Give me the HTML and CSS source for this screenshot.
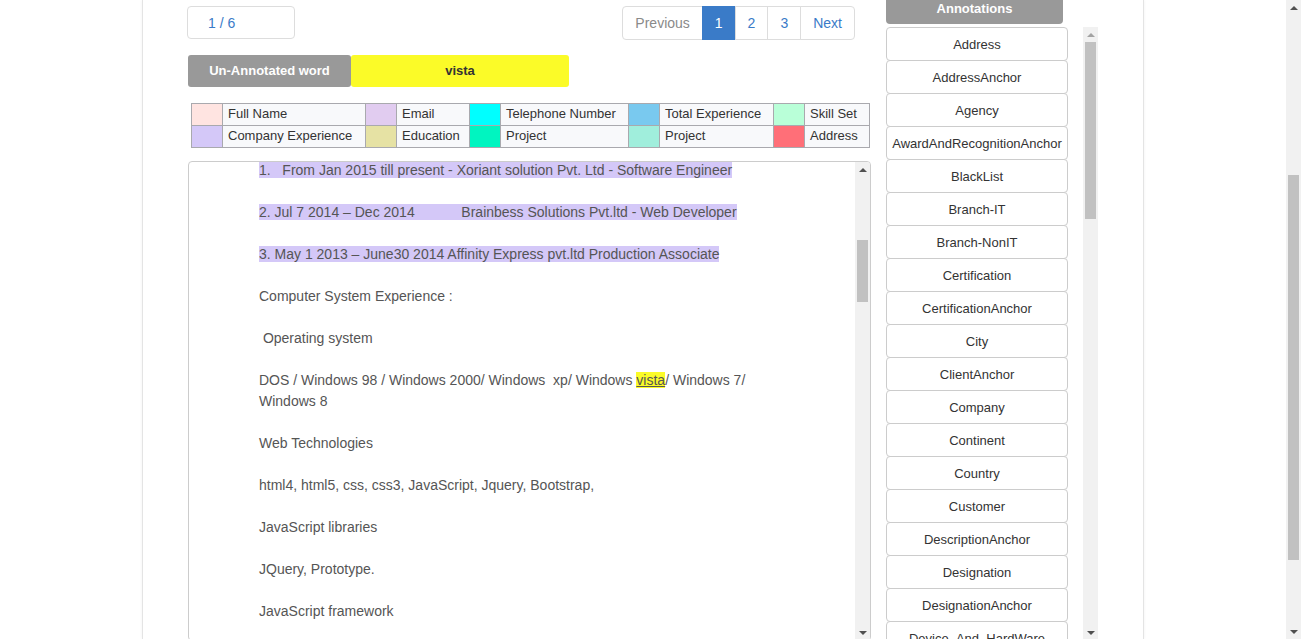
FILE: index.html
```html
<!DOCTYPE html>
<html lang="en">
<head>
<meta charset="utf-8">
<title>Annotation</title>
<link rel="stylesheet" href="styles.css">
</head>
<body>
<div class="window">
  <div class="viewport">
    <div class="container">
      <div class="main">
        <div class="left">
          <div class="toolbar">
            <div class="counter">1 / 6</div>
            <ul class="pagination">
              <li class="disabled"><a href="#">Previous</a></li>
              <li class="active"><a href="#">1</a></li>
              <li><a href="#">2</a></li>
              <li><a href="#">3</a></li>
              <li><a href="#">Next</a></li>
            </ul>
          </div>
          <div class="word-row">
            <span class="word-label">Un-Annotated word</span>
            <span class="word-value">vista</span>
          </div>
          <table class="legend">
            <colgroup>
              <col class="c-sw"><col class="c1"><col class="c-sw"><col class="c2"><col class="c-sw"><col class="c3"><col class="c-sw"><col class="c4"><col class="c-sw"><col class="c5">
            </colgroup>
            <tr>
              <td class="sw sw-fullname"></td><td>Full Name</td>
              <td class="sw sw-email"></td><td>Email</td>
              <td class="sw sw-phone"></td><td>Telephone Number</td>
              <td class="sw sw-total"></td><td>Total Experience</td>
              <td class="sw sw-skill"></td><td>Skill Set</td>
            </tr>
            <tr>
              <td class="sw sw-company"></td><td>Company Experience</td>
              <td class="sw sw-edu"></td><td>Education</td>
              <td class="sw sw-project"></td><td>Project</td>
              <td class="sw sw-project2"></td><td>Project</td>
              <td class="sw sw-address"></td><td>Address</td>
            </tr>
          </table>
          <div class="doc">
            <div class="doc-view">
              <div class="doc-inner">
<p><span class="hl-company">1.   From Jan 2015 till present - Xoriant solution Pvt. Ltd - Software Engineer</span></p>
<p><span class="hl-company">2. Jul 7 2014 – Dec 2014            Brainbess Solutions Pvt.ltd - Web Developer</span></p>
<p><span class="hl-company">3. May 1 2013 – June30 2014 Affinity Express pvt.ltd Production Associate</span></p>
<p>Computer System Experience :</p>
<p> Operating system</p>
<p>DOS / Windows 98 / Windows 2000/ Windows  xp/ Windows <span class="hl-word">vista</span>/ Windows 7/ Windows 8</p>
<p>Web Technologies</p>
<p>html4, html5, css, css3, JavaScript, Jquery, Bootstrap,</p>
<p>JavaScript libraries</p>
<p>JQuery, Prototype.</p>
<p>JavaScript framework</p>
              </div>
            </div>
            <div class="vscroll">
              <div class="sb-btn up"></div>
              <div class="sb-track"><div class="sb-thumb thumb-doc"></div></div>
              <div class="sb-btn down"></div>
            </div>
          </div>
        </div>
        <div class="right">
          <div class="ann-head">Annotations</div>
          <div class="ann-list">
            <div class="ann-view">
              <button class="ann-btn">Address</button>
              <button class="ann-btn">AddressAnchor</button>
              <button class="ann-btn">Agency</button>
              <button class="ann-btn">AwardAndRecognitionAnchor</button>
              <button class="ann-btn">BlackList</button>
              <button class="ann-btn">Branch-IT</button>
              <button class="ann-btn">Branch-NonIT</button>
              <button class="ann-btn">Certification</button>
              <button class="ann-btn">CertificationAnchor</button>
              <button class="ann-btn">City</button>
              <button class="ann-btn">ClientAnchor</button>
              <button class="ann-btn">Company</button>
              <button class="ann-btn">Continent</button>
              <button class="ann-btn">Country</button>
              <button class="ann-btn">Customer</button>
              <button class="ann-btn">DescriptionAnchor</button>
              <button class="ann-btn">Designation</button>
              <button class="ann-btn">DesignationAnchor</button>
              <button class="ann-btn">Device_And_HardWare</button>
            </div>
            <div class="vscroll">
              <div class="sb-btn up off"></div>
              <div class="sb-track"><div class="sb-thumb thumb-list"></div></div>
              <div class="sb-btn down"></div>
            </div>
          </div>
        </div>
      </div>
    </div>
  </div>
  <div class="vscroll page-scroll">
    <div class="sb-btn up"></div>
    <div class="sb-track"><div class="sb-thumb thumb-page"></div></div>
    <div class="sb-btn down"></div>
  </div>
</div>
</body>
</html>
```

FILE: styles.css
```css
* { box-sizing: border-box; }
html, body { margin: 0; padding: 0; height: 100%; overflow: hidden; }
body {
  font-family: "Liberation Sans", Arial, sans-serif;
  font-size: 14px;
  color: #333;
  background: #fff;
}
.window { display: flex; height: 100vh; }
.viewport { flex: 1; overflow: hidden; height: 100%; }
.container {
  width: 1002px;
  height: 100%;
  margin: 0 auto;
  padding: 0 45px 0 44px;
  border-left: 1px solid #e4e4e4;
  border-right: 1px solid #e4e4e4;
  box-shadow: 0 0 3px rgba(0, 0, 0, 0.06);
}
.main { display: flex; gap: 16px; align-items: flex-start; }
.left { width: 683px; padding-top: 6px; }
.right { width: 212px; margin-top: -8px; }

/* scrollbars */
.vscroll {
  width: 15px;
  flex: none;
  display: flex;
  flex-direction: column;
  background: #f1f1f1;
}
.sb-btn {
  height: 15px;
  flex: none;
  display: flex;
  align-items: center;
  justify-content: center;
}
.sb-btn::before {
  content: "";
  width: 0;
  height: 0;
  border-left: 4px solid transparent;
  border-right: 4px solid transparent;
}
.sb-btn.up::before { border-bottom: 4px solid #505050; }
.sb-btn.down::before { border-top: 4px solid #505050; }
.sb-btn.up.off::before { border-bottom-color: #a3a3a3; }
.sb-track { flex: 1; padding: 0 2px; }
.sb-thumb { background: #c1c1c1; }
.thumb-doc { margin-top: 63px; height: 62px; }
.thumb-list { margin-top: 0; height: 177px; }
.thumb-page { margin-top: 160px; height: 385px; }

/* toolbar */
.toolbar {
  display: flex;
  justify-content: space-between;
  align-items: flex-start;
  padding-right: 15px;
  height: 34px;
}
.counter {
  width: 108px;
  height: 33px;
  border: 1px solid #ddd;
  border-radius: 4px;
  padding: 1px 0 0 20px;
  line-height: 31px;
  color: #3a7bc8;
}
.pagination { display: flex; list-style: none; margin: 0; padding: 0; }
.pagination a {
  display: block;
  padding: 6px 12px;
  line-height: 20px;
  border: 1px solid #ddd;
  margin-left: -1px;
  color: #3a7bc8;
  text-decoration: none;
  background: #fff;
}
.pagination li:first-child a { margin-left: 0; border-radius: 4px 0 0 4px; }
.pagination li:last-child a { border-radius: 0 4px 4px 0; }
.pagination .disabled a { color: #8a8a8a; }
.pagination .active a { background: #3a7bc8; border-color: #3a7bc8; color: #fff; }

.word-row { display: flex; margin: 15px 0 0 1px; height: 32px; }
.word-label, .word-value {
  display: flex;
  align-items: center;
  justify-content: center;
  padding-bottom: 2px;
  font-size: 13px;
  font-weight: bold;
  border-radius: 3px;
}
.word-label { width: 163px; background: #999; color: #fff; }
.word-value { width: 218px; background: #fbfb28; color: #333; }

/* legend */
.legend {
  margin: 16px 0 0 4px;
  border-collapse: collapse;
  table-layout: fixed;
  width: 678px;
  font-size: 13px;
}
.legend tr { height: 22px; }
.legend td {
  border: 1px solid #a9a9ae;
  padding: 0 0 1px 5px;
  background: #f8f9fb;
  color: #333;
  line-height: 18px;
  white-space: nowrap;
}
.legend .c-sw { width: 31px; }
.legend .c1 { width: 143px; }
.legend .c2 { width: 73px; }
.legend .c3 { width: 128px; }
.legend .c4 { width: 114px; }
.legend .c5 { width: 65px; }
.legend td.sw { padding: 0; }
.legend td.sw-fullname { background: #ffe4e1; }
.legend td.sw-email { background: #e1ccf0; }
.legend td.sw-phone { background: #00ffff; }
.legend td.sw-total { background: #79c9ef; }
.legend td.sw-skill { background: #b9ffd8; }
.legend td.sw-company { background: #d4c8f8; }
.legend td.sw-edu { background: #e6e2a4; }
.legend td.sw-project { background: #00f5c0; }
.legend td.sw-project2 { background: #a0eedc; }
.legend td.sw-address { background: #ff6f78; }

/* document */
.doc {
  display: flex;
  margin: 13px 0 0 1px;
  width: 683px;
  height: 480px;
  border: 1px solid #ccc;
  border-radius: 4px;
  overflow: hidden;
  color: #555;
}
.doc-view { flex: 1; overflow: hidden; }
.doc-inner { margin-top: -2px; padding-left: 70px; }
.doc p {
  margin: 0 0 21px;
  line-height: 21px;
  width: 520px;
  white-space: pre-wrap;
}
.hl-company { background: #d4c8f8; }
.hl-word { background: #fbfb28; text-decoration: underline; }

/* annotations */
.ann-head {
  width: 177px;
  height: 32px;
  padding-top: 2px;
  background: #999;
  color: #fff;
  font-weight: bold;
  font-size: 13px;
  text-align: center;
  line-height: 30px;
  border-radius: 0 0 4px 4px;
}
.ann-list { display: flex; margin-top: 3px; height: 613px; }
.ann-view { flex: 1; overflow: hidden; }
.ann-btn {
  display: block;
  width: 182px;
  height: 34px;
  margin: -1px 0 0 0;
  padding: 2px 0 0 0;
  border: 1px solid #ccc;
  border-radius: 4px;
  background: #fff;
  color: #333;
  font-family: "Liberation Sans", Arial, sans-serif;
  font-size: 13px;
  line-height: 30px;
  text-align: center;
  white-space: nowrap;
  overflow: hidden;
}
.ann-btn:first-child { margin-top: 0; }
```
